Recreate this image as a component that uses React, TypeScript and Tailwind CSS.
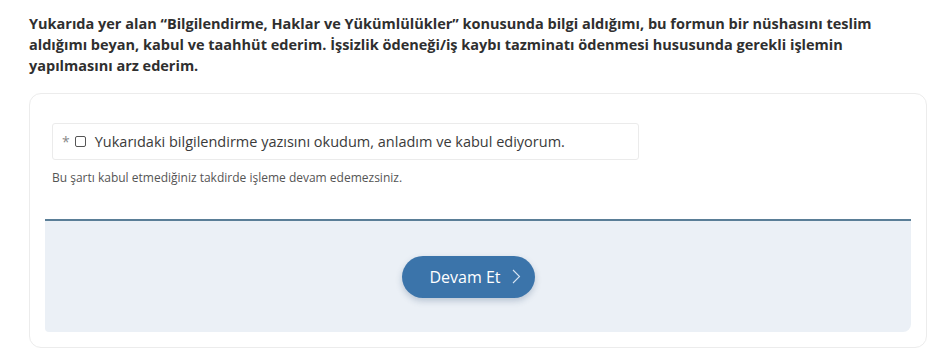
import React, { useState } from 'react';

const App: React.FC = () => {
  const [accepted, setAccepted] = useState(false);

  return (
    <div className="min-h-[358px] bg-white px-[29px] pt-[13px] font-['Open_Sans',sans-serif] text-[#333]">
      {/* Declaration text */}
      <p className="max-w-[880px] text-[14.5px] font-bold leading-[21px] text-[#2f2f2f]">
        Yukarıda yer alan “Bilgilendirme, Haklar ve Yükümlülükler” konusunda bilgi aldığımı, bu formun bir nüshasını teslim
        aldığımı beyan, kabul ve taahhüt ederim. İşsizlik ödeneği/iş kaybı tazminatı ödenmesi hususunda gerekli işlemin
        yapılmasını arz ederim.
      </p>

      <div className="mt-[17px] w-[898px] rounded-xl border border-[#ececec] p-[15px]">
        <div className="px-[7px] pt-[14px] pb-[33px]">
          <label className="flex h-[37px] w-[587px] items-center rounded-[3px] border border-[#ebebeb] pl-[9px] text-[14.5px] text-[#3a3a3a]">
            <span className="mr-[5px] text-[14px] text-[#888]">*</span>
            <input
              type="checkbox"
              checked={accepted}
              onChange={(e) => setAccepted(e.target.checked)}
              className="mr-[9px] h-[11px] w-[11px] appearance-none rounded-[2px] border border-[#555] bg-white"
            />
            Yukarıdaki bilgilendirme yazısını okudum, anladım ve kabul ediyorum.
          </label>
          <p className="mt-[10px] text-[12px] leading-[16px] text-[#555]">
            Bu şartı kabul etmediğiniz takdirde işleme devam edemezsiniz.
          </p>
        </div>

        {/* Action panel */}
        <div className="flex h-[113px] items-center justify-center rounded-br-lg rounded-bl-sm border-t-2 border-[#5a7e97] bg-[#ebf0f6] pr-[19px]">
          <button className="flex h-[42px] items-center rounded-full bg-[#3b74aa] pl-[27px] pr-[14px] text-[16px] text-white shadow-[0_3px_6px_rgba(40,70,110,0.25)]">
            Devam Et
            <svg width="9" height="15" viewBox="0 0 9 15" className="ml-[11px]" fill="none">
              <path d="M1 1l6.5 6.5L1 14" stroke="#d6e4f2" strokeWidth="1.1" />
            </svg>
          </button>
        </div>
      </div>
    </div>
  );
};

export default App;
